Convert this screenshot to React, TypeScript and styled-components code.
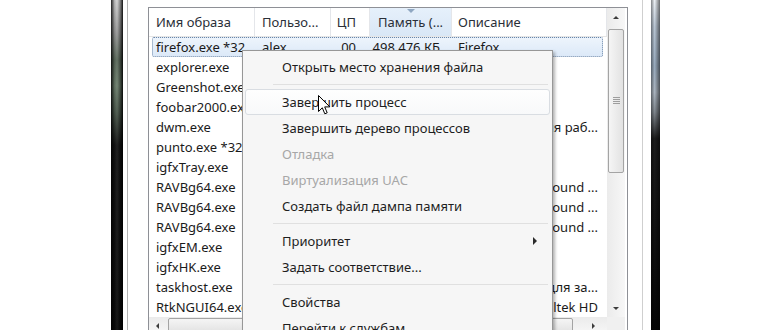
import styled, { createGlobalStyle } from 'styled-components'

const GlobalStyle = createGlobalStyle`
  html, body {
    margin: 0;
    padding: 0;
    background: #fff;
  }
  body {
    font-family: "Noto Sans", "Open Sans", sans-serif;
    color: #1a1a1a;
  }
`

const Screen = styled.div`
  position: relative;
  width: 770px;
  height: 330px;
  overflow: hidden;
  background: #fff;
  display: flex;
  padding-left: 111px;
  box-sizing: border-box;
`

const FrameBar = styled.div<{ $side: 'left' | 'right' }>`
  flex: none;
  width: ${({$side}) => $side === 'left' ? 12 : 9}px;
  background: ${({$side}) => $side === 'left'
    ? `linear-gradient(to right, rgba(0,0,0,.85) 0, rgba(0,0,0,.15) 30%, rgba(255,255,255,.05) 50%, rgba(0,0,0,.35) 75%, rgba(0,0,0,.9) 100%),
       linear-gradient(to bottom, #d4d4d4 0, #9c9c9c 10%, #5f6e5f 18%, #6f826f 26%, #4c5a4d 34%, #151515 44%, #0c0c0c 100%)`
    : `linear-gradient(to right, rgba(0,0,0,.45), rgba(0,0,0,0) 40%, rgba(0,0,0,.55)),
       linear-gradient(to bottom, #eef2f6 0, #b9c6d4 8%, #98aabd 20%, #aab4bf 28%, #7e858c 34%, #1c1c1c 42%, #050505 100%)`};
`

const WindowBody = styled.div`
  flex: none;
  width: 528px;
  display: flex;
  padding: 0 8px 0 4px;
  box-sizing: border-box;
  background: #fff;
`

const InnerPanel = styled.div`
  flex: none;
  width: 516px;
  height: 100%;
  border-left: 1px solid #b4b4b4;
  border-right: 1px solid #cfcfcf;
  padding: 7px 16px 0 20px;
  box-sizing: border-box;
`

const ListView = styled.div`
  width: 478px;
  border: 1px solid #8e9096;
  display: grid;
  grid-template-columns: 458px 18px;
  grid-template-rows: 309px 17px;
  background: #fff;
  font-size: 13px;
`

const Table = styled.div`
  display: flex;
  flex-direction: column;
`

const columns = '106px 76px 39px 82px 155px'

const HeaderRow = styled.div`
  display: grid;
  grid-template-columns: ${columns};
  height: 29px;
  border-bottom: 1px solid #e5e5e5;
  box-sizing: border-box;
`

const HeaderCell = styled.div<{ $align?: 'left' | 'right'; $pad?: number; $sorted?: boolean }>`
  position: relative;
  display: flex;
  align-items: center;
  justify-content: ${({$align}) => $align === 'right' ? 'flex-end' : 'flex-start'};
  padding: ${({$align, $pad = 7}) => $align === 'right' ? `0 ${$pad}px 0 0` : `0 0 0 ${$pad}px`};
  border-right: 1px solid #e4e6ea;
  color: #2a2f38;
  white-space: nowrap;
  overflow: hidden;
  background: ${({$sorted}) => $sorted ? 'linear-gradient(#e6f0fb, #d9e7f6)' : '#fff'};
`

const SortArrow = styled.span`
  position: absolute;
  left: 37px;
  top: 1px;
  width: 0;
  height: 0;
  border-left: 4px solid transparent;
  border-right: 4px solid transparent;
  border-top: 4px solid #8fa7c2;
`

const Row = styled.div<{ $selected?: boolean }>`
  position: relative;
  display: grid;
  grid-template-columns: ${columns};
  height: 20px;
  align-items: center;

  ${({$selected}) => $selected && `
    &::before {
      content: '';
      position: absolute;
      top: 0;
      bottom: 0;
      left: 3px;
      right: 4px;
      border: 1px dotted #6b86a8;
      background: linear-gradient(#edf4fc, #dce9f8);
      border-radius: 2px;
    }
  `}
`

const Cell = styled.div<{ $align?: 'left' | 'right' | 'tail'; $pad?: number }>`
  position: relative;
  display: flex;
  justify-content: ${({$align}) => $align === 'left' || !$align ? 'flex-start' : 'flex-end'};
  padding: ${({$align, $pad = 7}) => $align === 'right' || $align === 'tail' ? `0 ${$pad}px 0 0` : `0 0 0 ${$pad}px`};
  white-space: nowrap;
  overflow: hidden;
  line-height: 20px;
`

const VScroll = styled.div`
  display: flex;
  flex-direction: column;
  align-items: center;
  background: linear-gradient(to right, #ebebeb, #f7f7f7);
`

const ScrollButton = styled.div<{ $wide?: boolean }>`
  flex: none;
  width: ${({$wide}) => $wide ? '17px' : '18px'};
  height: ${({$wide}) => $wide ? '17px' : '18px'};
  display: flex;
  align-items: center;
  justify-content: center;
`

const Arrow = styled.span<{ $dir: 'up' | 'down' | 'left' | 'right' }>`
  width: 0;
  height: 0;
  ${({$dir}) => {
    switch ($dir) {
      case 'up':
        return 'border-left: 3px solid transparent; border-right: 3px solid transparent; border-bottom: 3px solid #3c3c3c;'
      case 'down':
        return 'border-left: 3px solid transparent; border-right: 3px solid transparent; border-top: 3px solid #3c3c3c;'
      case 'left':
        return 'border-top: 3px solid transparent; border-bottom: 3px solid transparent; border-right: 3px solid #3c3c3c;'
      default:
        return 'border-top: 3px solid transparent; border-bottom: 3px solid transparent; border-left: 3px solid #3c3c3c;'
    }
  }}
`

const VThumb = styled.div`
  flex: none;
  width: 16px;
  height: 144px;
  margin-top: 3px;
  box-sizing: border-box;
  border: 1px solid #a4a4a4;
  border-radius: 2px;
  background: linear-gradient(to right, #f5f5f5, #e2e2e2);
  display: flex;
  align-items: center;
  justify-content: center;
`

const Grip = styled.div<{ $horizontal?: boolean }>`
  width: ${({$horizontal}) => $horizontal ? '8px' : '7px'};
  height: ${({$horizontal}) => $horizontal ? '7px' : '8px'};
  background: ${({$horizontal}) => $horizontal
    ? 'repeating-linear-gradient(to right, #8a8a8a 0 1px, transparent 1px 2px)'
    : 'repeating-linear-gradient(to bottom, #8a8a8a 0 1px, transparent 1px 2px)'};
  opacity: .8;
`

const BottomButton = styled(ScrollButton)`
  margin-top: auto;
`

const HScroll = styled.div`
  display: flex;
  align-items: center;
  background: linear-gradient(#ebebeb, #f7f7f7);
`

const HThumb = styled.div`
  width: 405px;
  height: 15px;
  margin-left: 2px;
  box-sizing: border-box;
  border: 1px solid #a4a4a4;
  border-radius: 2px;
  background: linear-gradient(#f5f5f5, #e2e2e2);
  display: flex;
  align-items: center;
  justify-content: center;
`

const HRightButton = styled(ScrollButton)`
  margin-left: auto;
  margin-right: 5px;
`

const Corner = styled.div`
  background: #f0f0f0;
`

const Menu = styled.div`
  position: absolute;
  left: 242px;
  top: 50px;
  width: 311px;
  padding: 3px 2px;
  box-sizing: border-box;
  background: #f6f6f6;
  border: 1px solid #979797;
  box-shadow: 2px 2px 3px rgba(0, 0, 0, .3);
  font-size: 13px;
`

const MenuItem = styled.div<{ $disabled?: boolean; $hover?: boolean }>`
  position: relative;
  height: 26px;
  display: flex;
  align-items: center;
  padding-left: 36px;
  box-sizing: border-box;
  border: 1px solid ${({$hover}) => $hover ? '#d9dde2' : 'transparent'};
  border-radius: 3px;
  background: ${({$hover}) => $hover ? 'linear-gradient(#fefefe, #f8f9fa)' : 'transparent'};
  color: ${({$disabled}) => $disabled ? '#a7a7a7' : '#1e1e1e'};
  white-space: nowrap;
`

const SubArrow = styled.span`
  margin-left: auto;
  margin-right: 12px;
  width: 0;
  height: 0;
  border-top: 4px solid transparent;
  border-bottom: 4px solid transparent;
  border-left: 4px solid #2b2b2b;
`

const MenuSeparator = styled.div`
  height: 1px;
  margin: 4px 2px 4px 28px;
  background: #e0e0e0;
`

const Cursor = styled.svg`
  position: absolute;
  left: 318px;
  top: 95px;
`

interface ProcessRow {
  name: string
  user?: string
  cpu?: string
  mem?: string
  desc?: string
  tail?: boolean
  selected?: boolean
}

// only the first row is fully visible, the rest of the columns sit under the context menu
const processes: ProcessRow[] = [
  {name: 'firefox.exe *32', user: 'alex', cpu: '00', mem: '498 476 КБ', desc: 'Firefox', selected: true},
  {name: 'explorer.exe'},
  {name: 'Greenshot.exe'},
  {name: 'foobar2000.exe'},
  {name: 'dwm.exe', desc: 'Диспетчер окон для раб...', tail: true},
  {name: 'punto.exe *32'},
  {name: 'igfxTray.exe'},
  {name: 'RAVBg64.exe', desc: 'HD Audio Background ...', tail: true},
  {name: 'RAVBg64.exe', desc: 'HD Audio Background ...', tail: true},
  {name: 'RAVBg64.exe', desc: 'HD Audio Background ...', tail: true},
  {name: 'igfxEM.exe'},
  {name: 'igfxHK.exe'},
  {name: 'taskhost.exe', desc: 'Хост-процесс для за...', tail: true},
  {name: 'RtkNGUI64.exe', desc: 'Диспетчер Realtek HD', tail: true},
]

type MenuEntry = { label: string; disabled?: boolean; hover?: boolean; submenu?: boolean } | 'sep'

const menuEntries: MenuEntry[] = [
  {label: 'Открыть место хранения файла'},
  'sep',
  {label: 'Завершить процесс', hover: true},
  {label: 'Завершить дерево процессов'},
  {label: 'Отладка', disabled: true},
  {label: 'Виртуализация UAC', disabled: true},
  {label: 'Создать файл дампа памяти'},
  'sep',
  {label: 'Приоритет', submenu: true},
  {label: 'Задать соответствие...'},
  'sep',
  {label: 'Свойства'},
  {label: 'Перейти к службам'},
]

export default function App() {
  return (
    <>
      <GlobalStyle />
      <Screen>
        <FrameBar $side="left" />
        <WindowBody>
          <InnerPanel>
            <ListView>
              <Table>
                <HeaderRow>
                  <HeaderCell>Имя образа</HeaderCell>
                  <HeaderCell>Пользо...</HeaderCell>
                  <HeaderCell $align="right" $pad={13}>ЦП</HeaderCell>
                  <HeaderCell $sorted $pad={8}>
                    <SortArrow />
                    Память (...
                  </HeaderCell>
                  <HeaderCell $pad={6}>Описание</HeaderCell>
                </HeaderRow>
                {processes.map((p, i) => (
                  <Row key={i} $selected={p.selected}>
                    <Cell>{p.name}</Cell>
                    <Cell>{p.user}</Cell>
                    <Cell $align="right" $pad={14}>{p.cpu}</Cell>
                    <Cell $align="right" $pad={12}>{p.mem}</Cell>
                    {p.tail
                      ? <Cell $align="tail" $pad={9}>{p.desc}</Cell>
                      : <Cell $pad={6}>{p.desc}</Cell>
                    }
                  </Row>
                ))}
              </Table>
              <VScroll>
                <ScrollButton><Arrow $dir="up" /></ScrollButton>
                <VThumb><Grip /></VThumb>
                <BottomButton><Arrow $dir="down" /></BottomButton>
              </VScroll>
              <HScroll>
                <ScrollButton $wide><Arrow $dir="left" /></ScrollButton>
                <HThumb><Grip $horizontal /></HThumb>
                <HRightButton $wide><Arrow $dir="right" /></HRightButton>
              </HScroll>
              <Corner />
            </ListView>
          </InnerPanel>
        </WindowBody>
        <FrameBar $side="right" />

        <Menu>
          {menuEntries.map((entry, i) => entry === 'sep'
            ? <MenuSeparator key={i} />
            : (
              <MenuItem key={i} $disabled={entry.disabled} $hover={entry.hover}>
                {entry.label}
                {entry.submenu ? <SubArrow /> : undefined}
              </MenuItem>
            )
          )}
        </Menu>

        <Cursor width="13" height="21" viewBox="0 0 13 21">
          <path
            d="M0.5 0.5 L0.5 16.5 L4.3 12.8 L6.8 18.8 L9.2 17.8 L6.7 11.9 L11.8 11.9 Z"
            fill="#fff"
            stroke="#000"
            strokeWidth="1"
            strokeLinejoin="round"
          />
        </Cursor>
      </Screen>
    </>
  )
}
